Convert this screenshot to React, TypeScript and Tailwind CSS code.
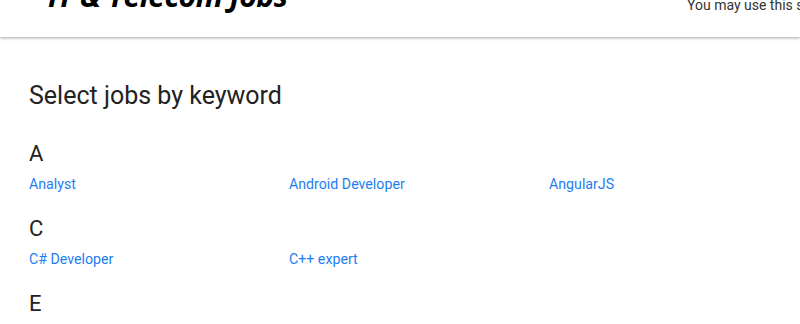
const sections = [
  { letter: 'A', items: ['Analyst', 'Android Developer', 'AngularJS'] },
  { letter: 'C', items: ['C# Developer', 'C++ expert'] },
  { letter: 'E', items: ['Embedded Developer', 'Excel'] },
];

export default function App() {
  return (
    <div className="w-[800px] h-[324px] overflow-hidden bg-white font-['Roboto',sans-serif] text-[#212121]">
      <div className="-mt-[43px]">
        <header className="h-[80px] flex items-end justify-between bg-white shadow-[0_1px_3px_rgba(0,0,0,0.35)] relative">
          <div className="pl-[48px] pb-[26px] font-['Open_Sans',sans-serif] italic font-bold text-[30px] leading-none text-black tracking-[-0.45px]">
            IT &amp; Telecom Jobs
          </div>
          <div className="pb-[25px] pl-[687px] absolute left-0 bottom-0 whitespace-nowrap text-[14px] leading-none text-[#333]">
            You may use this site to find the IT and Telecom jobs
          </div>
        </header>
        <main className="px-[29px] pt-[44px]">
          <h1 className="text-[25px] leading-[30px] font-normal text-[#222]">Select jobs by keyword</h1>
          <div className="mt-[30px] flex flex-col gap-[23px]">
            {sections.map((s) => (
              <section key={s.letter}>
                <h2 className="text-[22px] leading-[26px] font-normal text-[#222]">{s.letter}</h2>
                <div className="grid grid-cols-3 w-[780px] mt-[8px]">
                  {s.items.map((it) => (
                    <a key={it} href="#" className="text-[14.2px] leading-[18px] text-[#1e7ef0]">{it}</a>
                  ))}
                </div>
              </section>
            ))}
          </div>
        </main>
      </div>
    </div>
  );
}
